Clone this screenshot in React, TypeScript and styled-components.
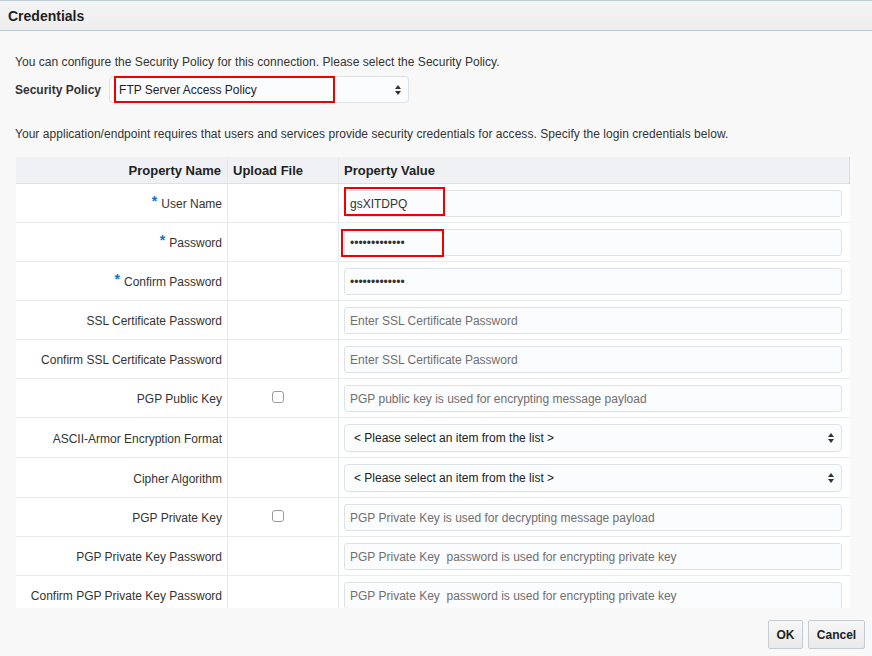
import React from "react";
import styled, { createGlobalStyle } from "styled-components";

const GlobalStyle = createGlobalStyle`
  html, body {
    margin: 0;
    padding: 0;
  }
  body {
    background: #f8f8f8;
    font-family: "Liberation Sans", Arial, Helvetica, sans-serif;
    font-size: 12px;
    color: #333;
  }
  * {
    box-sizing: border-box;
  }
`;

const Dialog = styled.div`
  width: 872px;
  height: 656px;
  display: flex;
  flex-direction: column;
  overflow: hidden;
`;

const TitleBar = styled.header`
  height: 31px;
  border-top: 1px solid #bfcdd4;
  border-bottom: 1px solid #bccbd2;
  background: linear-gradient(#f4f4f4, #eeeeee);
  display: flex;
  align-items: center;
  padding-left: 8px;
`;

const Title = styled.h1`
  margin: 0;
  font-size: 14px;
  font-weight: bold;
  color: #222;
`;

const Content = styled.div`
  padding: 0 0 0 15px;
`;

const Para = styled.p<{ $top: number }>`
  margin: ${(p) => p.$top}px 0 0;
  line-height: 15px;
  color: #333;
  letter-spacing: 0.04px;
`;

const PolicyRow = styled.div`
  margin-top: 6px;
  display: flex;
  align-items: center;
  gap: 8px;
  height: 27px;
`;

const FieldLabel = styled.label`
  font-weight: bold;
  color: #333;
`;

const Anchor = styled.div<{ $width: number }>`
  position: relative;
  width: ${(p) => p.$width}px;
`;

const Mark = styled.div<{ $l: number; $t: number; $w: number; $h: number }>`
  position: absolute;
  left: ${(p) => p.$l}px;
  top: ${(p) => p.$t}px;
  width: ${(p) => p.$w}px;
  height: ${(p) => p.$h}px;
  border: 2px solid #f00000;
  pointer-events: none;
`;

const SelectBox = styled.select<{ $h: number; $pad: number }>`
  appearance: none;
  -webkit-appearance: none;
  width: 100%;
  height: ${(p) => p.$h}px;
  border: 1px solid #dde2e7;
  border-radius: 4px;
  background: #fbfcfd;
  padding: 1px 20px 0 ${(p) => p.$pad}px;
  font-family: inherit;
  font-size: 12px;
  color: #222;
  outline: none;
`;

const Arrows = styled.svg`
  position: absolute;
  right: 8px;
  top: 50%;
  margin-top: -5px;
  pointer-events: none;
`;

const TableScroll = styled.div`
  margin: 15px 0 0 1px;
  width: 834px;
  height: 451px;
  overflow: hidden;
`;

const Grid = styled.div<{ $h: number; $head?: boolean }>`
  display: grid;
  grid-template-columns: 212px 111px 510px;
  height: ${(p) => p.$h}px;
  background: ${(p) => (p.$head ? "#eff1f4" : "#ffffff")};
  border-bottom: 1px solid ${(p) => (p.$head ? "#dce0e4" : "#e8ebee")};
  border-right: ${(p) => (p.$head ? "1px solid #d6dbe0" : "none")};
`;

const Cell = styled.div<{ $align?: "left" | "right"; $pad?: string; $last?: boolean }>`
  display: flex;
  align-items: center;
  justify-content: ${(p) => (p.$align === "right" ? "flex-end" : "flex-start")};
  padding: ${(p) => p.$pad || "0"};
  border-right: ${(p) => (p.$last ? "none" : "1px solid #e6e9ec")};
  white-space: nowrap;
`;

const HeadText = styled.span`
  font-size: 13px;
  font-weight: bold;
  color: #222;
`;

const Star = styled.span`
  color: #0572ce;
  font-weight: bold;
  font-size: 14px;
  position: relative;
  top: -3px;
  margin-right: 4px;
`;

const TextInput = styled.input`
  width: 100%;
  height: 27px;
  border: 1px solid #dde2e7;
  border-radius: 3px;
  background: #fbfcfd;
  padding: 1px 0 0 5px;
  font-family: inherit;
  font-size: 12px;
  color: #333;
  outline: none;
  &::placeholder {
    color: #6f6f6f;
    white-space: pre;
  }
`;

const Check = styled.input`
  appearance: none;
  -webkit-appearance: none;
  width: 12px;
  height: 12px;
  margin: -2px 0 0 0;
  border: 1px solid #9a9a9a;
  border-radius: 3px;
  background: #fff;
`;

const Footer = styled.div`
  display: flex;
  justify-content: flex-end;
  gap: 5px;
  padding: 12px 7px 0 0;
`;

const Button = styled.button<{ $w: number }>`
  width: ${(p) => p.$w}px;
  height: 29px;
  border: 1px solid #c4cdd4;
  border-radius: 2px;
  background: linear-gradient(#f7f7f7, #e9e9e9);
  font-family: inherit;
  font-size: 12px;
  font-weight: bold;
  color: #222;
  padding: 0;
`;

const ArrowsIcon = () => (
  <Arrows width="6" height="10" viewBox="0 0 6 10">
    <path d="M0 4 L3 0 L6 4 Z" fill="#333" />
    <path d="M0 6 L3 10 L6 6 Z" fill="#333" />
  </Arrows>
);

type MarkSpec = { l: number; t: number; w: number; h: number };

type RowSpec = {
  label: string;
  required?: boolean;
  upload?: boolean;
  kind?: "text" | "select";
  value?: string;
  placeholder?: string;
  mark?: MarkSpec;
};

const dots = "•••••••••••••";
const privPwd = "PGP Private Key  password is used for encrypting private key";

const rows: RowSpec[] = [
  { label: "User Name", required: true, value: "gsXITDPQ", mark: { l: 0, t: -3, w: 101, h: 29 } },
  { label: "Password", required: true, value: dots, mark: { l: -3, t: 0, w: 103, h: 28 } },
  { label: "Confirm Password", required: true, value: dots },
  { label: "SSL Certificate Password", placeholder: "Enter SSL Certificate Password" },
  { label: "Confirm SSL Certificate Password", placeholder: "Enter SSL Certificate Password" },
  { label: "PGP Public Key", upload: true, placeholder: "PGP public key is used for encrypting message payload" },
  { label: "ASCII-Armor Encryption Format", kind: "select" },
  { label: "Cipher Algorithm", kind: "select" },
  { label: "PGP Private Key", upload: true, placeholder: "PGP Private Key is used for decrypting message payload" },
  { label: "PGP Private Key Password", placeholder: privPwd },
  { label: "Confirm PGP Private Key Password", placeholder: privPwd },
];

const PropertyRow = ({ row }: { row: RowSpec }) => {
  const isSelect = row.kind === "select";
  return (
    <Grid $h={isSelect ? 40 : 39}>
      <Cell $align="right" $pad="2px 5px 0 0">
        {row.required && <Star>*</Star>}
        {row.label}
      </Cell>
      <Cell $pad="0 0 0 44px">{row.upload && <Check type="checkbox" />}</Cell>
      <Cell $last $pad="0 0 0 5px">
        <Anchor $width={498}>
          {isSelect ? (
            <>
              <SelectBox $h={28} $pad={9} defaultValue="">
                <option value="">{"< Please select an item from the list >"}</option>
              </SelectBox>
              <ArrowsIcon />
            </>
          ) : (
            <TextInput
              type="text"
              readOnly
              value={row.value ?? ""}
              placeholder={row.placeholder}
            />
          )}
          {row.mark && <Mark $l={row.mark.l} $t={row.mark.t} $w={row.mark.w} $h={row.mark.h} />}
        </Anchor>
      </Cell>
    </Grid>
  );
};

export default function App() {
  return (
    <>
      <GlobalStyle />
      <Dialog>
        <TitleBar>
          <Title>Credentials</Title>
        </TitleBar>
        <Content>
          <Para $top={24}>
            You can configure the Security Policy for this connection. Please select the Security Policy.
          </Para>
          <PolicyRow>
            <FieldLabel>Security Policy</FieldLabel>
            <Anchor $width={300}>
              <SelectBox $h={27} $pad={9} defaultValue="ftp">
                <option value="ftp">FTP Server Access Policy</option>
              </SelectBox>
              <ArrowsIcon />
              <Mark $l={5} $t={0} $w={221} $h={27} />
            </Anchor>
          </PolicyRow>
          <Para $top={24}>
            Your application/endpoint requires that users and services provide security credentials for access. Specify the login credentials below.
          </Para>
          <TableScroll>
            <Grid $h={27} $head>
              <Cell $align="right" $pad="1px 6px 0 0">
                <HeadText>Property Name</HeadText>
              </Cell>
              <Cell $pad="1px 0 0 5px">
                <HeadText>Upload File</HeadText>
              </Cell>
              <Cell $last $pad="1px 0 0 5px">
                <HeadText>Property Value</HeadText>
              </Cell>
            </Grid>
            {rows.map((row) => (
              <PropertyRow key={row.label} row={row} />
            ))}
          </TableScroll>
        </Content>
        <Footer>
          <Button $w={35}>OK</Button>
          <Button $w={57}>Cancel</Button>
        </Footer>
      </Dialog>
    </>
  );
}
